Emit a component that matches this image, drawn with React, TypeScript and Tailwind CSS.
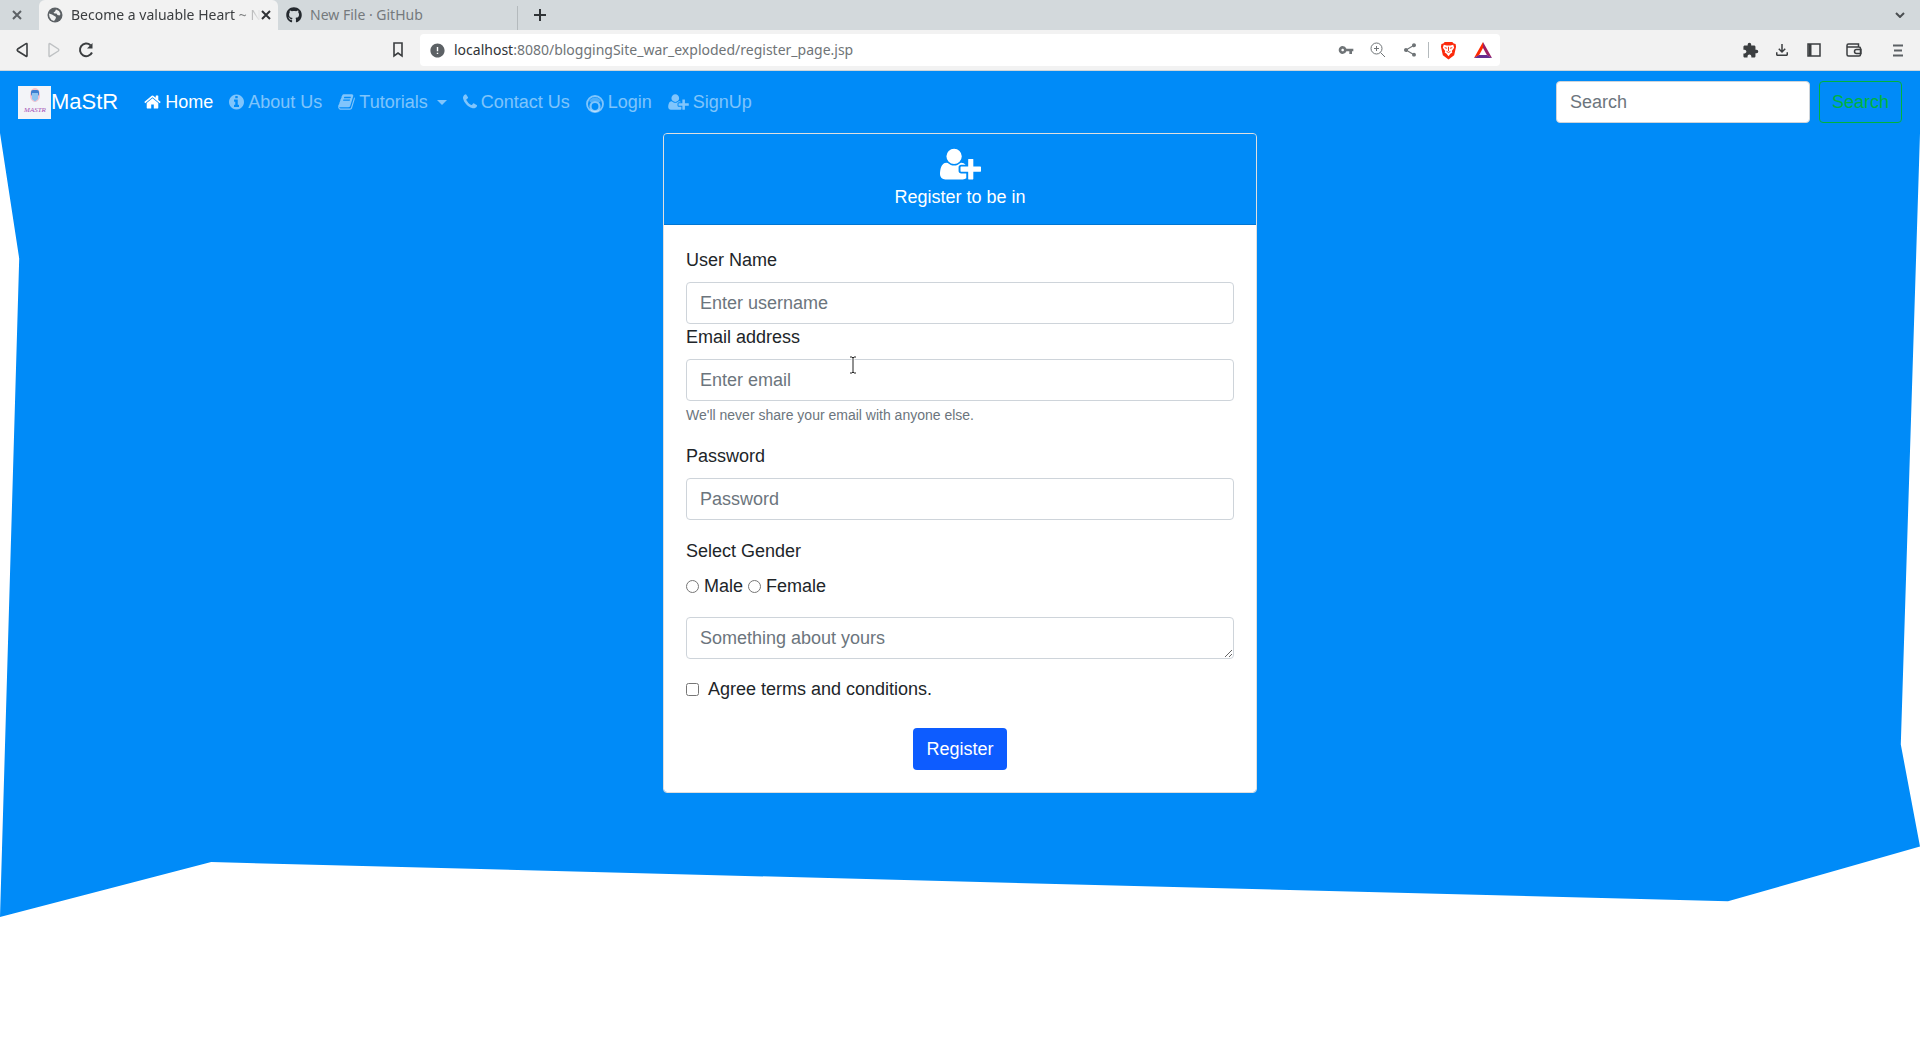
import type { ReactNode } from "react";
import { FaGithub } from "react-icons/fa";
import { MdError, MdExtension, MdOutlineFileDownload, MdShare, MdVpnKey } from "react-icons/md";

const icons = {
  home: {
    viewBox: "64 0 1664 1792",
    path: "M1472 992v480q0 26-19 45t-45 19h-384v-384h-256v384h-384q-26 0-45-19t-19-45v-480q0-1 .5-3t.5-3l575-474 575 474q1 2 1 6zm223-69l-62 74q-8 9-21 11h-3q-13 0-21-7l-692-577-692 577q-12 8-24 7-13-2-21-11l-62-74q-8-10-7-23.5t11-21.5l719-599q32-26 76-26t76 26l244 204v-195q0-14 9-23t23-9h192q14 0 23 9t9 23v408l219 182q10 8 11 21.5t-7 23.5z",
  },
  info: {
    viewBox: "128 0 1536 1792",
    path: "M1152 1376v-160q0-14-9-23t-23-9h-96v-512q0-14-9-23t-23-9h-320q-14 0-23 9t-9 23v160q0 14 9 23t23 9h96v320h-96q-14 0-23 9t-9 23v160q0 14 9 23t23 9h448q14 0 23-9t9-23zm-128-896v-160q0-14-9-23t-23-9h-192q-14 0-23 9t-9 23v160q0 14 9 23t23 9h192q14 0 23-9t9-23zm640 416q0 209-103 385.5t-279.5 279.5-385.5 103-385.5-103-279.5-279.5-103-385.5 103-385.5 279.5-279.5 385.5-103 385.5 103 279.5 279.5 103 385.5z",
  },
  book: {
    viewBox: "64 0 1664 1792",
    path: "M1703 478q40 57 18 129l-275 906q-19 64-76.5 107.5t-122.5 43.5h-923q-77 0-148.5-53.5t-99.5-131.5q-24-67-2-127 0-4 3-27t4-37q1-8-3-21.5t-3-19.5q2-11 8-21t16.5-23.5 16.5-23.5q23-38 45-91.5t30-91.5q3-10 .5-30t-.5-28q3-11 17-28t17-23q21-36 42-92t25-90q1-9-2.5-32t.5-28q4-13 22-30.5t22-22.5q19-26 42.5-84.5t27.5-96.5q1-8-3-25.5t-2-26.5q2-8 9-18t18-23 17-21q8-12 16.5-30.5t15-35 16-36 19.5-32 26.5-23.5 36-11.5 47.5 5.5l-1 3q38-9 51-9h761q74 0 114 56t18 130l-274 906q-36 119-71.5 153.5t-128.5 34.5h-869q-27 0-38 15-11 16-1 43 24 70 144 70h923q29 0 56-15.5t35-41.5l300-987q7-22 5-57 38 15 59 43zm-1064 2q-4 13 2 22.5t20 9.5h608q13 0 25.5-9.5t16.5-22.5l21-64q4-13-2-22.5t-20-9.5h-608q-13 0-25.5 9.5t-16.5 22.5zm-83 256q-4 13 2 22.5t20 9.5h608q13 0 25.5-9.5t16.5-22.5l21-64q4-13-2-22.5t-20-9.5h-608q-13 0-25.5 9.5t-16.5 22.5z",
  },
  phone: {
    viewBox: "192 0 1408 1792",
    path: "M1600 1240q0 27-10 70.5t-21 68.5q-21 50-122 106-94 51-186 51-27 0-53-3.5t-57.5-12.5-47-14.5-55.5-20.5-49-18q-98-35-175-83-127-79-264-216t-216-264q-48-77-83-175-3-9-18-49t-20.5-55.5-14.5-47-12.5-57.5-3.5-53q0-92 51-186 56-101 106-122 25-11 68.5-21t70.5-10q14 0 21 3 18 6 53 76 11 19 30 54t35 63.5 31 53.5q3 4 17.5 25t21.5 35.5 7 28.5q0 20-28.5 50t-62 55-62 53-28.5 46q0 9 5 22.5t8.5 20.5 14 24 11.5 19q76 137 174 235t235 174q2 1 19 11.5t24 14 20.5 8.5 22.5 5q18 0 46-28.5t53-62 55-62 50-28.5q14 0 28.5 7t35.5 21.5 25 17.5q25 15 53.5 31t63.5 35 54 30q70 35 76 53 3 7 3 21z",
  },
  userPlus: {
    viewBox: "0 0 2048 1792",
    path: "M704 896q-159 0-271.5-112.5t-112.5-271.5 112.5-271.5 271.5-112.5 271.5 112.5 112.5 271.5-112.5 271.5-271.5 112.5zm960 128h352q13 0 22.5 9.5t9.5 22.5v192q0 13-9.5 22.5t-22.5 9.5h-352v352q0 13-9.5 22.5t-22.5 9.5h-192q-13 0-22.5-9.5t-9.5-22.5v-352h-352q-13 0-22.5-9.5t-9.5-22.5v-192q0-13 9.5-22.5t22.5-9.5h352v-352q0-13 9.5-22.5t22.5-9.5h192q13 0 22.5 9.5t9.5 22.5v352zm-736 224q0 52 38 90t90 38h256v238q-68 50-171 50h-874q-121 0-194-69t-73-190q0-53 3.5-103.5t14-109 26.5-108.5 43-97.5 62-81 85.5-53.5 111.5-20q19 0 39 17 79 61 154.5 91.5t164.5 30.5 164.5-30.5 154.5-91.5q20-17 39-17 132 0 217 96h-223q-52 0-90 38t-38 90v192z",
  },
};

function Glyph({ name, className }: { name: keyof typeof icons; className: string }) {
  return (
    <svg viewBox={icons[name].viewBox} className={className} fill="currentColor">
      <path d={icons[name].path} />
    </svg>
  );
}

function LoginGlyph() {
  return (
    <svg viewBox="0 0 18 18" className="mt-1 mr-1 size-[18px]" fill="none" stroke="currentColor">
      <circle cx="9" cy="9" r="8" strokeWidth="1.8" />
      <path d="M3 6a7 7 0 0 1 12 0l-2 1.500a6 6 0 0 0-8 0Z" fill="currentColor" stroke="none" opacity=".6" />
      <circle cx="9" cy="11.500" r="4.500" strokeWidth="2.200" />
    </svg>
  );
}

function NavLink({ children, active = false }: { children: ReactNode; active?: boolean }) {
  return (
    <li>
      <a href="#" className={`flex items-center px-2 ${active ? "text-white" : "text-white/50"}`}>
        {children}
      </a>
    </li>
  );
}

function TabStrip() {
  return (
    <div className="flex h-[30px] items-center bg-[#d3d9dc] font-['Noto_Sans',sans-serif] text-sm text-[#3b3e40]">
      <button aria-label="Close tab" className="flex w-[39px] justify-center pr-[6px]">
        <svg viewBox="0 0 10 10" className="size-[10px]" stroke="#5c6165" strokeWidth="2">
          <path d="M1 1l8 8M9 1l-8 8" />
        </svg>
      </button>
      <div className="flex h-full w-[239px] items-center rounded-t-md bg-[#f2f2f2] pr-[7px] pl-2">
        <svg viewBox="0 0 16 16" className="size-4 shrink-0">
          <circle cx="8" cy="8" r="7.500" fill="#5c6165" />
          <path d="M9 2.500l3 1.500 1.500 3-1 1.500-2-.5-1-1.500H7.500L6.500 5.500l1.500-1Z" fill="#f2f2f2" />
          <path d="M2 6.500l3 1 2.500 1.500 1.500 1-.5 2-1.500 2-2.500-1L2.500 10Z" fill="#f2f2f2" />
        </svg>
        <span className="ml-2 grow whitespace-nowrap [mask-image:linear-gradient(to_right,black_85%,transparent)]">
          Become a valuable Heart ~ N
        </span>
        <button aria-label="Close tab">
          <svg viewBox="0 0 10 10" className="size-[10px]" stroke="#303336" strokeWidth="2">
            <path d="M1 1l8 8M9 1l-8 8" />
          </svg>
        </button>
      </div>
      <div className="flex w-[239px] items-center pl-2 text-[#75797c]">
        <FaGithub className="size-4 text-[#24292e]" />
        <span className="ml-2">New File · GitHub</span>
      </div>
      <div className="h-6 w-px self-end bg-[#b4babd]" />
      <button aria-label="New tab" className="ml-4">
        <svg viewBox="0 0 12 12" className="size-3" stroke="#303336" strokeWidth="2">
          <path d="M6 0v12M0 6h12" />
        </svg>
      </button>
      <button aria-label="Search tabs" className="mr-[15px] ml-auto">
        <svg viewBox="0 0 10 6" className="w-[10px]" fill="none" stroke="#4a4e51" strokeWidth="2">
          <path d="M1 1l4 4 4-4" />
        </svg>
      </button>
    </div>
  );
}

function Toolbar() {
  return (
    <div className="flex h-[41px] items-center border-b border-[#cfd6da] bg-[#f2f2f2] text-[#3b3e40]">
      <div className="flex w-[392px] items-center pl-4">
        <button aria-label="Back">
          <svg viewBox="0 0 12 16" className="h-4 w-3" fill="none" stroke="currentColor" strokeWidth="1.6">
            <path d="M11 2.200v11.600q0 1-.9.5L1.700 9q-1-1 0-2L10 1.700q1-.5 1 .5Z" />
          </svg>
        </button>
        <button aria-label="Forward" className="ml-5 text-[#bfc2c4]">
          <svg viewBox="0 0 12 16" className="h-4 w-3" fill="none" stroke="currentColor" strokeWidth="1.4">
            <path d="M1 2.200v11.600q0 1 .9.5L10.300 9q1-1 0-2L2 1.700q-1-.5-1 .5Z" />
          </svg>
        </button>
        <button aria-label="Reload" className="ml-[18px]">
          <svg viewBox="0 0 16 16" className="size-4" fill="none" stroke="currentColor" strokeWidth="2">
            <path d="M12.500 3.200A6.300 6.300 0 1 0 14 10.500" />
            <path d="M14.500 1v5.500H9Z" fill="currentColor" stroke="none" />
          </svg>
        </button>
      </div>
      <button aria-label="Bookmark this page" className="mr-4">
        <svg viewBox="0 0 12 16" className="h-4 w-3" fill="none" stroke="currentColor" strokeWidth="1.6">
          <path d="M2 1h8v13l-4-3-4 3Z" />
        </svg>
      </button>
      <div className="flex h-8 w-[1080px] items-center rounded-sm bg-white pr-2 pl-[9px] text-[#6f7477]">
        <MdError className="size-[17px] text-[#5c6165]" />
        <span className="ml-2 font-['Noto_Sans',sans-serif] text-sm">
          <span className="text-[#303336]">localhost</span>:8080/bloggingSite_war_exploded/register_page.jsp
        </span>
        <MdVpnKey className="ml-auto size-4" />
        <svg viewBox="0 0 16 16" className="ml-4 size-4" fill="none" stroke="currentColor">
          <circle cx="6.500" cy="6.500" r="5.500" />
          <path d="M10.500 10.500l4.500 4.500M6.500 4v5M4 6.500h5" />
        </svg>
        <MdShare className="ml-4 size-4" />
        <div className="ml-[10px] h-4 w-px bg-[#b4babd]" />
        <svg viewBox="0 0 18 20" className="ml-[11px] h-[19px] w-[17px]">
          <path d="M5 1h8l1.500 1.500L16.500 3l.5 3-2 9-6 4.500L3 15 1 6l.5-3 2-.5Z" fill="#fb2a0c" />
          <path d="M4 4l3 .7h4L14 4l1 3-2.500 3.500.5 1.500-2 1.500L9 16l-2-2.500L5 12l.5-1.500L3 7Z" fill="#fff" />
          <path d="M5 7l2.500.7M13 7l-2.500.7M9 6v4.500M7 11l2 1 2-1" stroke="#fb2a0c" fill="none" />
        </svg>
        <svg viewBox="0 0 18 17" className="ml-[17px] h-[17px] w-[18px]">
          <path d="M9 0L0 16l5-2.800L9 6Z" fill="#ff2a00" />
          <path d="M9 0l9 16-5-2.800L9 6Z" fill="#9e1f63" />
          <path d="M0 16h18l-5-3H5Z" fill="#662d91" />
        </svg>
      </div>
      <div className="mr-[17px] ml-auto flex items-center">
        <MdExtension className="size-[17px]" />
        <MdOutlineFileDownload className="ml-[14px] size-[18px]" />
        <svg viewBox="0 0 14 14" className="ml-4 size-[14px]" fill="none" stroke="currentColor" strokeWidth="1.5">
          <path d="M1 1h12v12H1Z" />
          <path d="M3 1v12" strokeWidth="3" />
        </svg>
        <svg viewBox="0 0 16 14" className="ml-[25px] h-[14px] w-4" fill="none" stroke="currentColor" strokeWidth="1.5">
          <path d="M12.500 4V1H2.500Q1 1 1 2.500v9Q1 13 2.500 13H13q1.500 0 1.500-1.500v-6Q14.500 4 13 4H1M15 6.500h-4.500a2 2 0 0 0 0 4H15Z" />
        </svg>
        <svg viewBox="0 0 10 13" className="ml-[31px] h-[13px] w-[10px]" stroke="#5c6165" strokeWidth="2">
          <path d="M0 1.500h10M1 6.500h8M0 11.500h10" />
        </svg>
      </div>
    </div>
  );
}

function Navbar() {
  return (
    <nav className="flex h-[62px] items-center bg-[#008bf8] px-[18px]">
      <a href="#" className="mr-[18px] flex items-center text-[22px] text-white">
        <svg viewBox="0 0 33 33" className="size-[33px] bg-[#f3f4f8]">
          <ellipse cx="17" cy="9" rx="5" ry="7" fill="#f2c3d0" />
          <rect x="13" y="4" width="8" height="6" rx="2" fill="#3f7fd0" />
          <path d="M14 7h6v6l-3 2.500-3-2.500Z" fill="#8fc4f0" />
          <text x="17" y="26" textAnchor="middle" fill="#a44fb5" className="font-['Liberation_Serif',serif] text-[7px] italic">
            MASTR
          </text>
        </svg>
        MaStR
      </a>
      <ul className="flex items-center">
        <NavLink active>
          <Glyph name="home" className="mr-1 h-[18px] w-[17px]" />
          Home
        </NavLink>
        <NavLink>
          <Glyph name="info" className="mr-1 h-[18px] w-[15px]" />
          About Us
        </NavLink>
        <NavLink>
          <Glyph name="book" className="mr-1 h-[18px] w-[17px]" />
          Tutorials
          <span className="ml-[9px] border-x-5 border-t-5 border-x-transparent border-t-current" />
        </NavLink>
        <NavLink>
          <Glyph name="phone" className="mr-1 h-[18px] w-[14px]" />
          Contact Us
        </NavLink>
        <NavLink>
          <LoginGlyph />
          Login
        </NavLink>
        <NavLink>
          <Glyph name="userPlus" className="mr-1 h-[18px] w-[21px]" />
          SignUp
        </NavLink>
      </ul>
      <form className="ml-auto flex gap-[9px]">
        <input
          type="search"
          aria-label="Search"
          placeholder="Search"
          className="h-[42px] w-[254px] rounded border border-[#ced4da] bg-white px-[13px] placeholder:text-[#6c757d]"
        />
        <button type="button" className="h-[42px] rounded border border-[#00b33c] px-3 text-[#00b33c]">
          Search
        </button>
      </form>
    </nav>
  );
}

const fieldClass =
  "block h-[42px] w-full rounded border border-[#ced4da] bg-white px-[13px] py-[7px] placeholder:text-[#6c757d]";

function Field({ id, label, type, placeholder }: { id: string; label: string; type: string; placeholder: string }) {
  return (
    <>
      <label htmlFor={id} className="mb-[9px] block">
        {label}
      </label>
      <input id={id} type={type} placeholder={placeholder} className={fieldClass} />
    </>
  );
}

function RegisterCard() {
  return (
    <div className="mx-auto w-full max-w-[594px] overflow-hidden rounded border border-[#dfdfdf] bg-white bg-clip-padding">
      <div className="flex h-[91px] flex-col items-center border-b border-black/15 bg-[#008bf8] pt-[11px] text-white">
        <Glyph name="userPlus" className="mb-px h-[38px] w-[41px]" />
        <p>Register to be in</p>
      </div>
      <form className="p-[22px]">
        <Field id="username" label="User Name" type="text" placeholder="Enter username" />
        <div className="mb-[17px]">
          <Field id="email" label="Email address" type="email" placeholder="Enter email" />
          <small className="mt-1 block text-sm leading-[21px] text-[#6c757d]">
            We'll never share your email with anyone else.
          </small>
        </div>
        <div className="mb-[18px]">
          <Field id="password" label="Password" type="password" placeholder="Password" />
        </div>
        <fieldset className="mb-[18px]">
          <legend className="mb-[9px]">Select Gender</legend>
          <div className="flex items-center gap-[5px]">
            <input id="male" type="radio" name="gender" className="size-[13px]" />
            <label htmlFor="male">Male</label>
            <input id="female" type="radio" name="gender" className="size-[13px]" />
            <label htmlFor="female">Female</label>
          </div>
        </fieldset>
        <textarea aria-label="About you" placeholder="Something about yours" className={`${fieldClass} mb-[17px] resize`} />
        <div className="mb-[26px] flex items-center gap-[9px]">
          <input id="terms" type="checkbox" className="size-[13px]" />
          <label htmlFor="terms">Agree terms and conditions.</label>
        </div>
        <button type="button" className="mx-auto block h-[42px] rounded bg-[#0d5cff] px-[13px] text-white">
          Register
        </button>
      </form>
    </div>
  );
}

// I-beam pointer resting over the email field
function TextCursor() {
  return (
    <svg viewBox="0 0 8 18" className="absolute top-[356px] left-[849px] h-[18px] w-2" fill="none">
      <path d="M1 1h2l1 1 1-1h2M4 2v14M1 17h2l1-1 1 1h2" stroke="#fff" strokeWidth="3" />
      <path d="M1 1h2l1 1 1-1h2M4 2v14M1 17h2l1-1 1 1h2" stroke="#222" />
    </svg>
  );
}

export default function App() {
  return (
    <div className="relative min-h-screen bg-white font-['Liberation_Sans',sans-serif] text-[18px] leading-[26px] text-[#212529]">
      <TabStrip />
      <Toolbar />
      <Navbar />
      <main className="bg-[#008bf8] pb-[124px] [clip-path:polygon(0_0,1%_16%,0_100%,11%_93%,90%_98%,100%_91%,99%_78%,100%_0)]">
        <RegisterCard />
      </main>
      <TextCursor />
    </div>
  );
}
